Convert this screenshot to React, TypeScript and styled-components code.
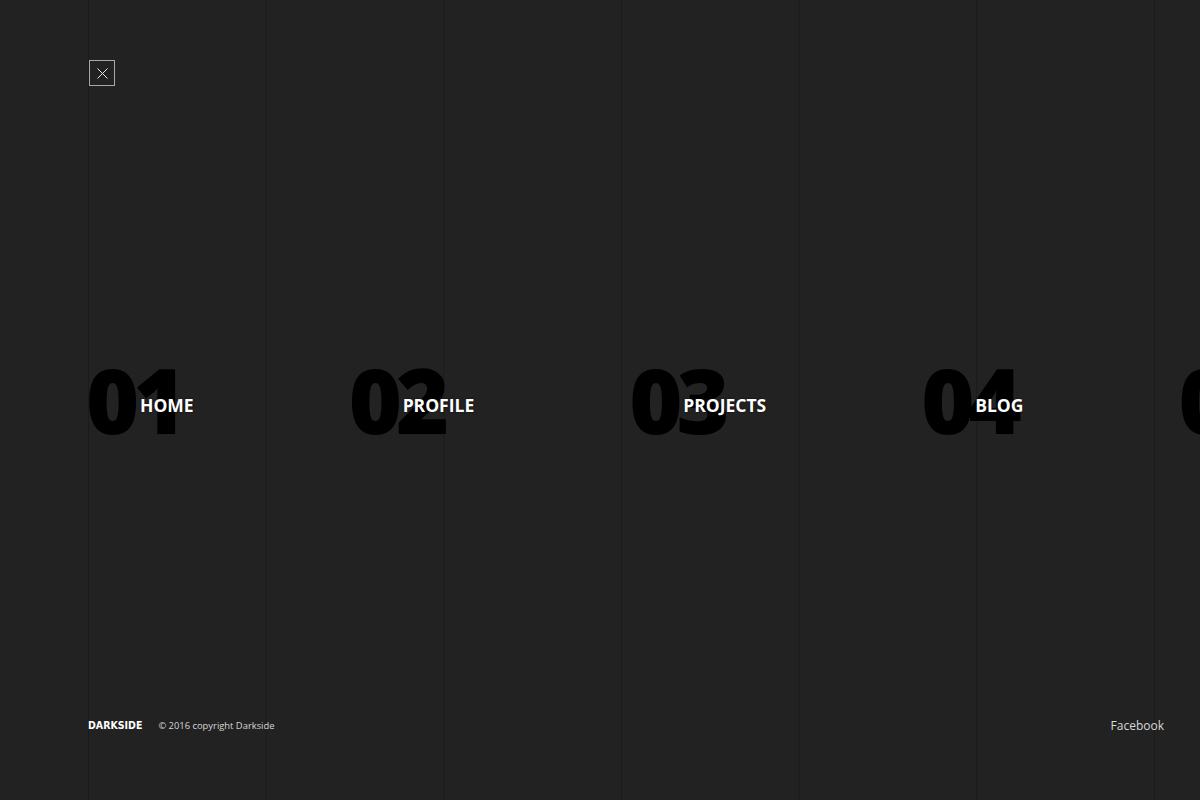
import React from "react";
import styled, { createGlobalStyle } from "styled-components";

const GlobalStyle = createGlobalStyle`
  html, body {
    margin: 0;
    padding: 0;
    height: 100%;
  }
  body {
    overflow: hidden;
    background-color: #222222;
    background-image: linear-gradient(to right, #1b1b1b 0, #1b1b1b 1px, transparent 1px);
    background-size: 177.67px 100%;
    background-position: 88px 0;
    background-repeat: repeat-x;
    font-family: "Open Sans", "Liberation Sans", sans-serif;
  }
`;

const Page = styled.div`
  height: 100vh;
  display: flex;
  flex-direction: column;
`;

const Header = styled.header`
  padding: 60px 0 0 89px;
`;

const CloseButton = styled.button`
  width: 26px;
  height: 26px;
  padding: 0;
  border: 1px solid #a8a8a8;
  background: transparent;
  display: flex;
  align-items: center;
  justify-content: center;
  cursor: pointer;
`;

const Main = styled.main`
  flex: 1;
  display: flex;
  align-items: center;
`;

const Menu = styled.nav`
  display: flex;
  gap: 155px;
  padding-left: 86px;
  white-space: nowrap;
`;

const Item = styled.a`
  display: grid;
  text-decoration: none;
`;

const Number = styled.span`
  grid-area: 1 / 1;
  margin-top: -3px;
  font-family: "Open Sans", "Liberation Sans", sans-serif;
  font-weight: 800;
  font-size: 91px;
  line-height: 1;
  letter-spacing: -6px;
  color: #000;
`;

const Label = styled.span`
  grid-area: 1 / 1;
  align-self: center;
  margin: 8px 0 0 54px;
  font-family: "Open Sans", "Liberation Sans", sans-serif;
  font-weight: 700;
  font-size: 17.5px;
  letter-spacing: 0;
  color: #fff;
  text-shadow: 0 0 2px rgba(0, 0, 0, 0.8);
`;

const Footer = styled.footer`
  display: flex;
  align-items: center;
  padding: 0 36px 65px 88px;
  height: 20px;
`;

const Brand = styled.span`
  font-family: "DejaVu Sans Condensed", "DejaVu Sans", sans-serif;
  font-weight: 700;
  font-size: 10.5px;
  letter-spacing: 0;
  color: #fff;
`;

const Copyright = styled.span`
  margin-left: 16px;
  font-size: 9.4px;
  color: #d6d6d6;
`;

const Social = styled.a`
  margin-left: auto;
  font-size: 12px;
  color: #d8d8d8;
  text-decoration: none;
`;

const items = [
  { n: "01", label: "HOME" },
  { n: "02", label: "PROFILE" },
  { n: "03", label: "PROJECTS" },
  { n: "04", label: "BLOG" },
  { n: "05", label: "CONTACT" },
];

export default function App() {
  return (
    <>
      <GlobalStyle />
      <Page>
        <Header>
          <CloseButton aria-label="Close menu">
            <svg width="11" height="11" viewBox="0 0 11 11">
              <path d="M0.5 0.5 L10.5 10.5 M10.5 0.5 L0.5 10.5" stroke="#e6e6e6" strokeWidth="1" fill="none" />
            </svg>
          </CloseButton>
        </Header>
        <Main>
          <Menu>
            {items.map((it) => (
              <Item key={it.n} href="#">
                <Number>{it.n}</Number>
                <Label>{it.label}</Label>
              </Item>
            ))}
          </Menu>
        </Main>
        <Footer>
          <Brand>DARKSIDE</Brand>
          <Copyright>© 2016 copyright Darkside</Copyright>
          <Social href="#">Facebook</Social>
        </Footer>
      </Page>
    </>
  );
}
